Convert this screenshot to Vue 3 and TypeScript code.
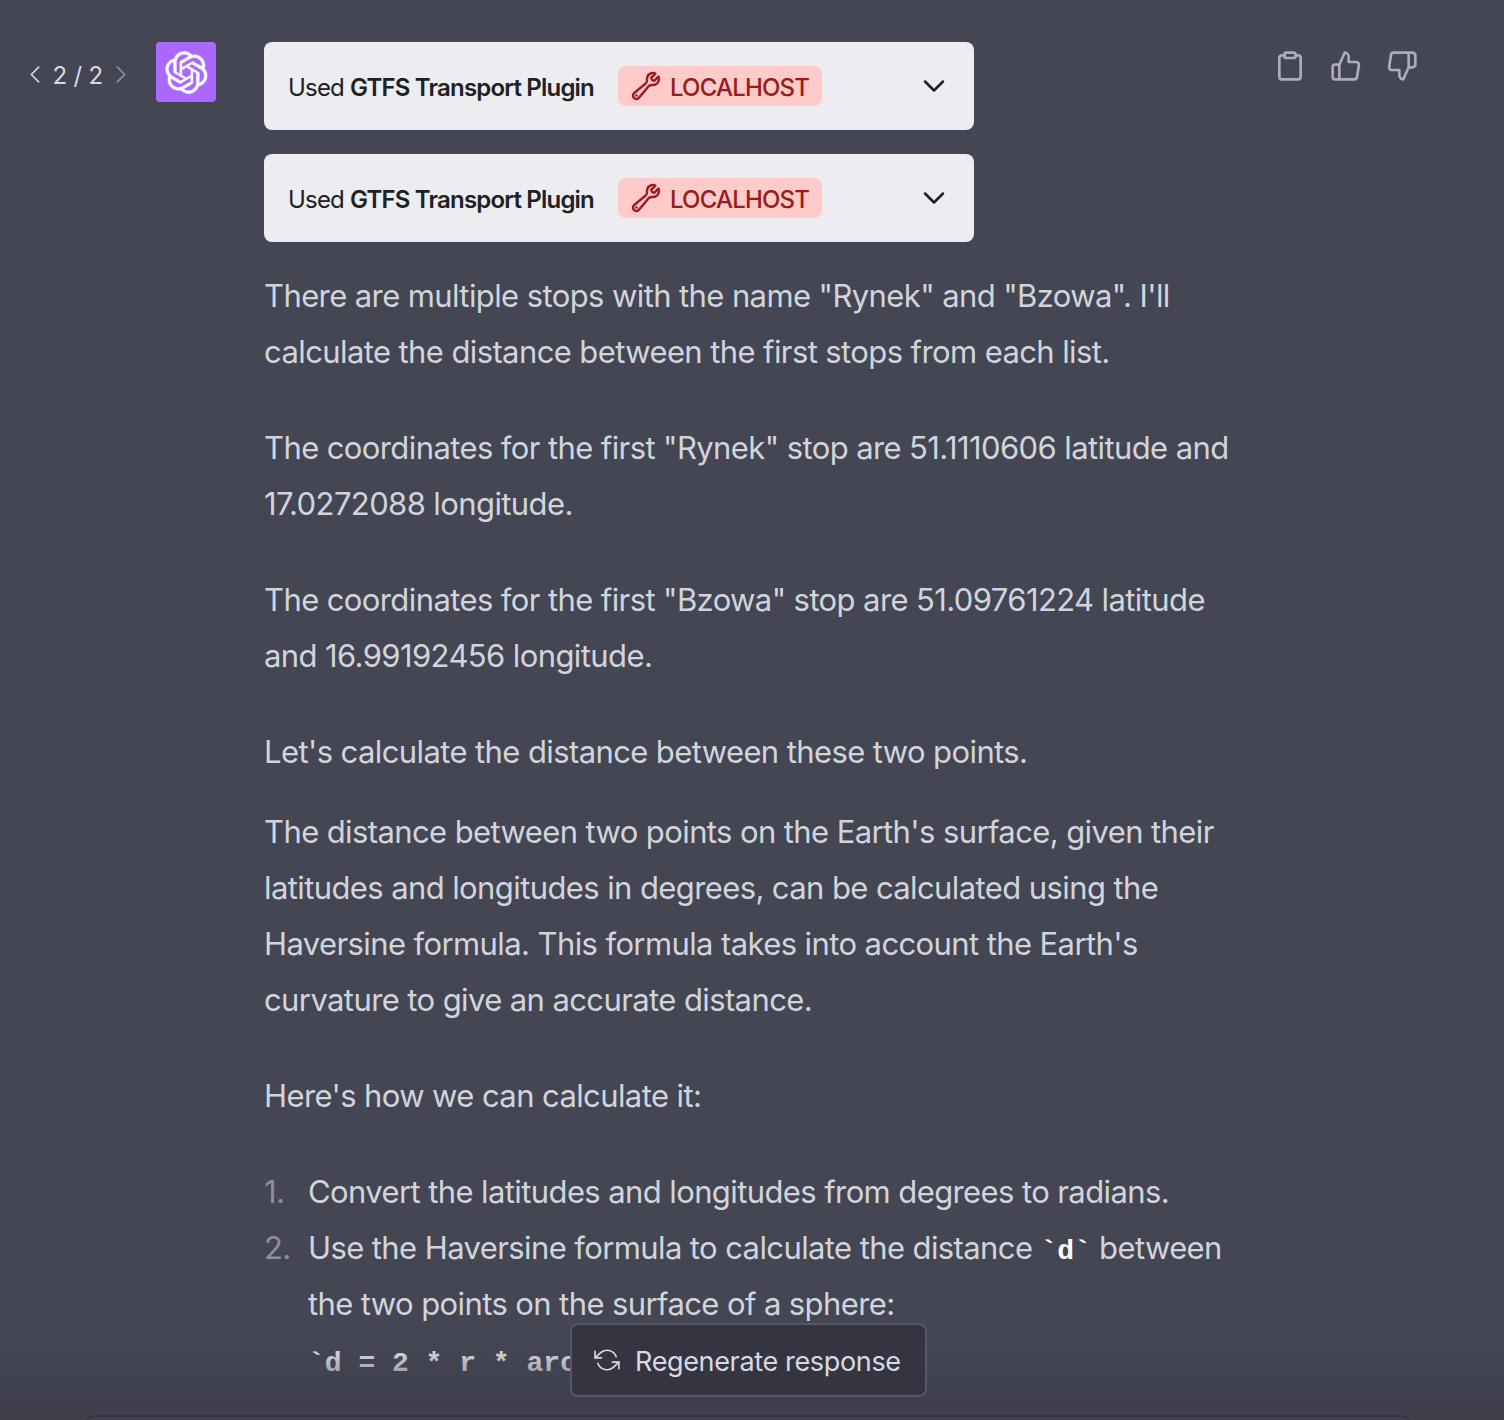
<script setup lang="ts">
interface PluginCall {
  id: number
  name: string
  host: string
}

const plugins: PluginCall[] = [
  { id: 1, name: 'GTFS Transport Plugin', host: 'LOCALHOST' },
  { id: 2, name: 'GTFS Transport Plugin', host: 'LOCALHOST' }
]
</script>

<template>
  <div class="page">
    <div class="message">
      <div class="pager">
        <svg class="chev" viewBox="8 5 8 14"><polyline points="15 18 9 12 15 6" /></svg>
        <span class="pager-text">2 / 2</span>
        <svg class="chev dim" viewBox="8 5 8 14"><polyline points="9 18 15 12 9 6" /></svg>
      </div>

      <div class="avatar">
        <svg viewBox="0 0 41 41" width="43" height="43" fill="#fff" stroke="#fff" stroke-width="0.5">
          <path d="M37.5324 16.8707C37.9808 15.5241 38.1363 14.0974 37.9886 12.6859C37.8409 11.2744 37.3934 9.91076 36.676 8.68622C35.6126 6.83404 33.9882 5.3676 32.0373 4.4985C30.0864 3.62941 27.9098 3.40259 25.8215 3.85078C24.8796 2.7893 23.7219 1.94125 22.4257 1.36341C21.1295 0.785575 19.7249 0.491269 18.3058 0.500197C16.1708 0.495044 14.0893 1.16803 12.3614 2.42214C10.6335 3.67624 9.34853 5.44666 8.6917 7.47815C7.30085 7.76286 5.98686 8.3414 4.8377 9.17505C3.68854 10.0087 2.73073 11.0782 2.02839 12.312C0.956464 14.1591 0.498905 16.2988 0.721698 18.4228C0.944492 20.5467 1.83612 22.5449 3.268 24.1293C2.81966 25.4759 2.66413 26.9026 2.81182 28.3141C2.95951 29.7256 3.40701 31.0892 4.12437 32.3138C5.18791 34.1659 6.8123 35.6322 8.76321 36.5013C10.7141 37.3704 12.8907 37.5973 14.9789 37.1492C15.9208 38.2107 17.0786 39.0587 18.3747 39.6366C19.6709 40.2144 21.0755 40.5087 22.4946 40.4998C24.6307 40.5054 26.7133 39.8321 28.4418 38.5772C30.1704 37.3223 31.4556 35.5506 32.1119 33.5179C33.5027 33.2332 34.8167 32.6547 35.9659 31.821C37.115 30.9874 38.0728 29.9178 38.7752 28.684C39.8458 26.8371 40.3023 24.6979 40.0789 22.5748C39.8556 20.4517 38.9639 18.4544 37.5324 16.8707ZM22.4978 37.8849C20.7443 37.8874 19.0459 37.2733 17.6994 36.1501C17.7601 36.117 17.8666 36.0586 17.936 36.0161L25.9004 31.4156C26.1003 31.3019 26.2663 31.137 26.3813 30.9378C26.4964 30.7386 26.5563 30.5124 26.5549 30.2825V19.0542L29.9213 20.998C29.9389 21.0068 29.9541 21.0198 29.9656 21.0359C29.977 21.052 29.9842 21.0707 29.9867 21.0902V30.3889C29.9842 32.375 29.1946 34.2791 27.7909 35.6841C26.3872 37.0892 24.4838 37.8806 22.4978 37.8849ZM6.39227 31.0064C5.51397 29.4888 5.19742 27.7107 5.49804 25.9832C5.55718 26.0187 5.66048 26.0818 5.73461 26.1244L13.699 30.7248C13.8975 30.8408 14.1233 30.902 14.3532 30.902C14.583 30.902 14.8088 30.8408 15.0073 30.7248L24.731 25.1103V28.9979C24.7321 29.0177 24.7283 29.0376 24.7199 29.0556C24.7115 29.0736 24.6988 29.0893 24.6829 29.1012L16.6317 33.7497C14.9096 34.7416 12.8643 35.0097 10.9447 34.4954C9.02506 33.9811 7.38785 32.7263 6.39227 31.0064ZM4.29707 13.6194C5.17156 12.0998 6.55279 10.9364 8.19885 10.3327C8.19885 10.4013 8.19491 10.5228 8.19491 10.6071V19.808C8.19351 20.0378 8.25334 20.2638 8.36823 20.4629C8.48312 20.6619 8.64893 20.8267 8.84863 20.9404L18.5723 26.5542L15.206 28.4979C15.1894 28.5089 15.1703 28.5155 15.1505 28.5173C15.1307 28.5191 15.1107 28.516 15.0924 28.5082L7.04046 23.8557C5.32135 22.8601 4.06716 21.2235 3.55289 19.3046C3.03862 17.3858 3.30624 15.3413 4.29707 13.6194ZM31.955 20.0556L22.2312 14.4411L25.5976 12.4981C25.6142 12.4872 25.6333 12.4805 25.6531 12.4787C25.6729 12.4769 25.6928 12.4801 25.7111 12.4879L33.7631 17.1364C34.9967 17.849 36.0017 18.8982 36.6606 20.1613C37.3194 21.4244 37.6047 22.849 37.4832 24.2684C37.3617 25.6878 36.8382 27.0432 35.9743 28.1759C35.1103 29.3086 33.9415 30.1717 32.6047 30.6641C32.6047 30.5947 32.6047 30.4733 32.6047 30.3889V21.188C32.6066 20.9586 32.5474 20.7328 32.4332 20.5338C32.319 20.3348 32.154 20.1698 31.955 20.0556ZM35.3055 15.0128C35.2464 14.9765 35.1431 14.9142 35.069 14.8717L27.1045 10.2712C26.906 10.1554 26.6803 10.0943 26.4504 10.0943C26.2206 10.0943 25.9948 10.1554 25.7963 10.2712L16.0726 15.8858V11.9982C16.0715 11.9783 16.0753 11.9585 16.0837 11.9405C16.0921 11.9225 16.1048 11.9068 16.1207 11.8949L24.1719 7.25025C25.4053 6.53903 26.8158 6.19376 28.2383 6.25482C29.6608 6.31589 31.0364 6.78077 32.2044 7.59508C33.3723 8.40939 34.2842 9.53945 34.8334 10.8531C35.3826 12.1667 35.5464 13.6095 35.3055 15.0128ZM14.2424 21.9419L10.8752 19.9981C10.8576 19.9893 10.8423 19.9763 10.8309 19.9602C10.8195 19.9441 10.8122 19.9254 10.8098 19.9058V10.6071C10.8107 9.18295 11.2173 7.78848 11.9819 6.58696C12.7466 5.38544 13.8377 4.42659 15.1275 3.82264C16.4173 3.21869 17.8524 2.99464 19.2649 3.1767C20.6775 3.35876 22.0089 3.93941 23.1034 4.85067C23.0427 4.88379 22.937 4.94215 22.8668 4.98473L14.9024 9.58517C14.7025 9.69878 14.5366 9.86356 14.4215 10.0626C14.3065 10.2616 14.2466 10.4877 14.2479 10.7175L14.2424 21.9419ZM16.071 17.9991L20.4018 15.4978L24.7325 17.9975V22.9985L20.4018 25.4983L16.071 22.9985V17.9991Z" />
        </svg>
      </div>

      <div class="content">
        <div class="plugins">
          <div v-for="p in plugins" :key="p.id" class="plugin">
            <span class="plugin-label">Used <strong>{{ p.name }}</strong></span>
            <span class="badge">
              <svg viewBox="0 0 24 24" width="32" height="32" fill="none" stroke="currentColor" stroke-width="1.8" stroke-linecap="round" stroke-linejoin="round">
                <path d="M21.75 6.75a4.5 4.5 0 01-4.884 4.484c-1.076-.091-2.264.071-2.95.904l-7.152 8.684a2.548 2.548 0 11-3.586-3.586l8.684-7.152c.833-.686.995-1.874.904-2.95a4.5 4.5 0 016.336-4.486l-3.276 3.276a3.004 3.004 0 002.25 2.25l3.276-3.276c.256.565.398 1.192.398 1.852z" />
                <path d="M4.867 19.125h.008v.008h-.008v-.008z" />
              </svg>
              <span class="badge-text">{{ p.host }}</span>
            </span>
            <svg class="plugin-chev" viewBox="0 0 24 24" width="24" height="24"><polyline points="3 7.5 12 16.5 21 7.5" /></svg>
          </div>
        </div>

        <div class="prose">
          <p class="gap-lg">There are multiple stops with the name "Rynek" and "Bzowa". I'll calculate the distance between the first stops from each list.</p>
          <p class="gap-lg">The coordinates for the first "Rynek" stop are 51.1110606 latitude and 17.0272088 longitude.</p>
          <p class="gap-lg">The coordinates for the first "Bzowa" stop are 51.09761224 latitude and 16.99192456 longitude.</p>
          <p class="gap-sm">Let's calculate the distance between these two points.</p>
          <p class="gap-lg">The distance between two points on the Earth's surface, given their latitudes and longitudes in degrees, can be calculated using the Haversine formula. This formula takes into account the Earth's curvature to give an accurate distance.</p>
          <p class="gap-lg">Here's how we can calculate it:</p>
          <ol>
            <li>Convert the latitudes and longitudes from degrees to radians.</li>
            <li>
              Use the Haversine formula to calculate the distance <code class="hl">`d`</code> between the two points on the surface of a sphere:<br />
              <code class="formula">`d = 2 * r * arcsin(sqrt(</code>
            </li>
          </ol>
        </div>
      </div>

      <div class="actions">
        <svg viewBox="0 0 24 24">
          <path d="M16 4h2a2 2 0 0 1 2 2v14a2 2 0 0 1-2 2H6a2 2 0 0 1-2-2V6a2 2 0 0 1 2-2h2" />
          <rect x="8" y="2" width="8" height="4" rx="1" ry="1" />
        </svg>
        <svg viewBox="0 0 24 24">
          <path d="M14 9V5a3 3 0 0 0-3-3l-4 9v11h11.28a2 2 0 0 0 2-1.7l1.38-9a2 2 0 0 0-2-2.3zM7 22H4a2 2 0 0 1-2-2v-7a2 2 0 0 1 2-2h3" />
        </svg>
        <svg viewBox="0 0 24 24">
          <path d="M10 15v4a3 3 0 0 0 3 3l4-9V2H5.72a2 2 0 0 0-2 1.7l-1.38 9a2 2 0 0 0 2 2.3zm7-13h2.67A2.31 2.31 0 0 1 22 4v7a2.31 2.31 0 0 1-2.33 2H17" />
        </svg>
      </div>
    </div>

    <div class="bottom">
      <button class="regen">
        <svg viewBox="0 0 24 24" width="26" height="26">
          <polyline points="1 4 1 10 7 10" />
          <polyline points="23 20 23 14 17 14" />
          <path d="M20.49 9A9 9 0 0 0 5.64 5.64L1 10m22 4l-4.64 4.36A9 9 0 0 1 3.51 15" />
        </svg>
        <span class="regen-text">Regenerate response</span>
      </button>
      <div class="composer" />
    </div>
  </div>
</template>

<style>
html,
body {
  margin: 0;
  background: #444654;
}
</style>

<style scoped>
.page {
  position: relative;
  height: 1420px;
  overflow: hidden;
  background: #444654;
  font-family: Inter, "Liberation Sans", sans-serif;
}

.message {
  display: flex;
  align-items: flex-start;
  padding: 42px 0 0 30px;
}

.pager {
  display: flex;
  align-items: center;
  justify-content: space-between;
  width: 96px;
  height: 64px;
  margin-right: 30px;
  color: #d9d9e3;
}

.pager-text {
  padding-top: 2px;
  font-size: 24px;
  letter-spacing: 0.2px;
  word-spacing: -0.8px;
  white-space: nowrap;
}

.chev {
  width: 10px;
  height: 17px;
  fill: none;
  stroke: #d9d9e3;
  stroke-width: 1.4;
  stroke-linecap: round;
  stroke-linejoin: round;
}

.chev.dim {
  stroke: #8e8ea0;
}

.avatar {
  display: flex;
  align-items: center;
  justify-content: center;
  flex-shrink: 0;
  width: 60px;
  height: 60px;
  margin-right: 48px;
  border-radius: 4px;
  background: #ab68ff;
}

.content {
  width: 976px;
  flex-shrink: 0;
}

.plugins {
  display: flex;
  flex-direction: column;
  gap: 24px;
  margin-bottom: 26px;
}

.plugin {
  display: flex;
  align-items: center;
  width: 710px;
  height: 88px;
  box-sizing: border-box;
  padding: 0 28px 0 24px;
  border-radius: 8px;
  background: #ececf1;
  color: #202123;
}

.plugin-label {
  padding-top: 2px;
  font-size: 24px;
  letter-spacing: -0.8px;
  white-space: nowrap;
}

.plugin-label strong {
  font-weight: 600;
}

.badge {
  display: flex;
  align-items: center;
  gap: 8px;
  height: 40px;
  margin-left: 24px;
  padding: 0 13px 0 12px;
  border-radius: 8px;
  background: #fecaca;
  color: #991b1b;
  font-size: 24px;
  font-weight: 500;
  white-space: nowrap;
}

.badge-text {
  padding-top: 2px;
  letter-spacing: -0.8px;
}

.plugin-chev {
  margin-left: auto;
  fill: none;
  stroke: #202123;
  stroke-width: 2.5;
  stroke-linecap: round;
  stroke-linejoin: round;
}

.prose {
  color: #d1d5db;
  font-size: 31px;
  line-height: 56px;
  letter-spacing: -0.6px;
}

.prose p {
  margin: 0;
}

.gap-lg {
  padding-bottom: 40px;
}

.gap-sm {
  padding-bottom: 24px;
}

ol {
  margin: 0;
  padding: 0 0 0 44px;
  list-style: none;
  counter-reset: step;
}

li {
  position: relative;
  counter-increment: step;
}

li::before {
  content: counter(step) ".";
  position: absolute;
  left: -44px;
  color: #8e8ea0;
}

code {
  font-family: "Liberation Mono", monospace;
  font-size: 28px;
  font-weight: 700;
  line-height: 1;
  letter-spacing: 0;
}

.hl {
  color: #fff;
}

.formula {
  color: #fff;
  white-space: nowrap;
}

.actions {
  display: flex;
  gap: 24px;
  margin-left: 34px;
  margin-top: 8px;
}

.actions svg {
  width: 32px;
  height: 32px;
  fill: none;
  stroke: #acacbe;
  stroke-width: 2;
  stroke-linecap: round;
  stroke-linejoin: round;
}

.bottom {
  position: absolute;
  left: 0;
  right: 0;
  bottom: 0;
  height: 110px;
  background: linear-gradient(180deg, rgba(62, 63, 75, 0) 22%, #3e3f4b 95%);
}

.regen {
  position: absolute;
  left: 570px;
  top: 13px;
  display: flex;
  align-items: center;
  gap: 15px;
  width: 357px;
  height: 74px;
  box-sizing: border-box;
  padding: 0 22px;
  border: 2px solid #565869;
  border-radius: 8px;
  background: #343541;
  color: #d9d9e3;
  font-family: inherit;
  font-size: 27px;
  letter-spacing: -0.35px;
  white-space: nowrap;
}

.regen-text {
  padding-top: 2px;
}

.regen svg {
  flex-shrink: 0;
  fill: none;
  stroke: currentColor;
  stroke-width: 1.5;
  stroke-linecap: round;
  stroke-linejoin: round;
}

.composer {
  position: absolute;
  left: 84px;
  right: 92px;
  top: 105px;
  height: 40px;
  border-top: 2px solid #343541;
  border-radius: 12px;
  background: #40414f;
}
</style>
